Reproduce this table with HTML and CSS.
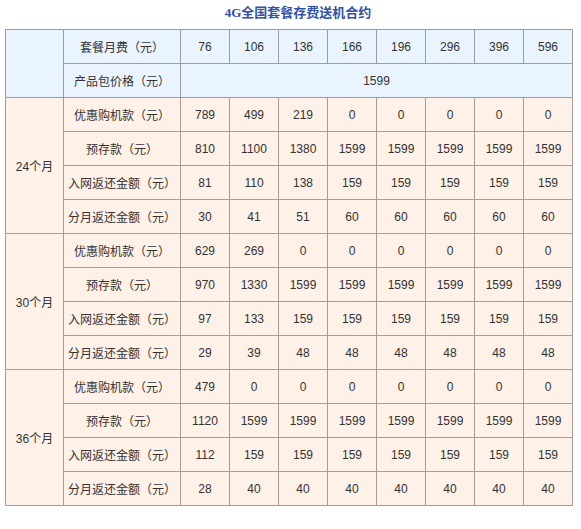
FILE: index.html
```html
<!DOCTYPE html>
<html lang="zh-CN">
<head>
<meta charset="utf-8">
<link rel="stylesheet" href="styles.css">
</head>
<body>
<div class="page">
  <div class="title">4G全国套餐存费送机合约</div>
  <table class="plan">
    <colgroup>
      <col class="c-term"><col class="c-label">
      <col class="c-num"><col class="c-num"><col class="c-num"><col class="c-num">
      <col class="c-num"><col class="c-num"><col class="c-num"><col class="c-num">
    </colgroup>
    <tbody class="head">
      <tr><td rowspan="2"></td><td>套餐月费（元）</td><td>76</td><td>106</td><td>136</td><td>166</td><td>196</td><td>296</td><td>396</td><td>596</td></tr>
      <tr><td>产品包价格（元）</td><td colspan="8">1599</td></tr>
    </tbody>
    <tbody class="body">
      <tr><td rowspan="4">24个月</td><td>优惠购机款（元）</td><td>789</td><td>499</td><td>219</td><td>0</td><td>0</td><td>0</td><td>0</td><td>0</td></tr>
      <tr><td>预存款（元）</td><td>810</td><td>1100</td><td>1380</td><td>1599</td><td>1599</td><td>1599</td><td>1599</td><td>1599</td></tr>
      <tr><td>入网返还金额（元）</td><td>81</td><td>110</td><td>138</td><td>159</td><td>159</td><td>159</td><td>159</td><td>159</td></tr>
      <tr><td>分月返还金额（元）</td><td>30</td><td>41</td><td>51</td><td>60</td><td>60</td><td>60</td><td>60</td><td>60</td></tr>
      <tr><td rowspan="4">30个月</td><td>优惠购机款（元）</td><td>629</td><td>269</td><td>0</td><td>0</td><td>0</td><td>0</td><td>0</td><td>0</td></tr>
      <tr><td>预存款（元）</td><td>970</td><td>1330</td><td>1599</td><td>1599</td><td>1599</td><td>1599</td><td>1599</td><td>1599</td></tr>
      <tr><td>入网返还金额（元）</td><td>97</td><td>133</td><td>159</td><td>159</td><td>159</td><td>159</td><td>159</td><td>159</td></tr>
      <tr><td>分月返还金额（元）</td><td>29</td><td>39</td><td>48</td><td>48</td><td>48</td><td>48</td><td>48</td><td>48</td></tr>
      <tr><td rowspan="4">36个月</td><td>优惠购机款（元）</td><td>479</td><td>0</td><td>0</td><td>0</td><td>0</td><td>0</td><td>0</td><td>0</td></tr>
      <tr><td>预存款（元）</td><td>1120</td><td>1599</td><td>1599</td><td>1599</td><td>1599</td><td>1599</td><td>1599</td><td>1599</td></tr>
      <tr><td>入网返还金额（元）</td><td>112</td><td>159</td><td>159</td><td>159</td><td>159</td><td>159</td><td>159</td><td>159</td></tr>
      <tr><td>分月返还金额（元）</td><td>28</td><td>40</td><td>40</td><td>40</td><td>40</td><td>40</td><td>40</td><td>40</td></tr>
    </tbody>
  </table>
</div>
</body>
</html>
```
FILE: styles.css
```css
html, body {
  margin: 0;
  padding: 0;
  background: #ffffff;
}
.page {
  padding: 0 0 0 5px;
  font-family: "Liberation Sans", "Noto Sans CJK SC", sans-serif;
  color: #333333;
}
.title {
  height: 29px;
  line-height: 26px;
  text-align: center;
  padding-left: 10px;
  font-family: "Liberation Serif", "Noto Sans CJK SC", serif;
  font-weight: bold;
  font-size: 13px;
  color: #3151a9;
}
.plan {
  border-collapse: collapse;
  table-layout: fixed;
  width: 567px;
  font-size: 12px;
}
.c-term { width: 58px; }
.c-label { width: 117px; }
.c-num { width: 49px; }
.plan td {
  height: 33px;
  padding: 0;
  text-align: center;
  vertical-align: middle;
  white-space: nowrap;
}
.head td {
  background: #eaf4fe;
  border: 1px solid #9a9ca6;
}
.body td {
  background: #fdf1e8;
  border: 1px solid #a99a92;
}
```
